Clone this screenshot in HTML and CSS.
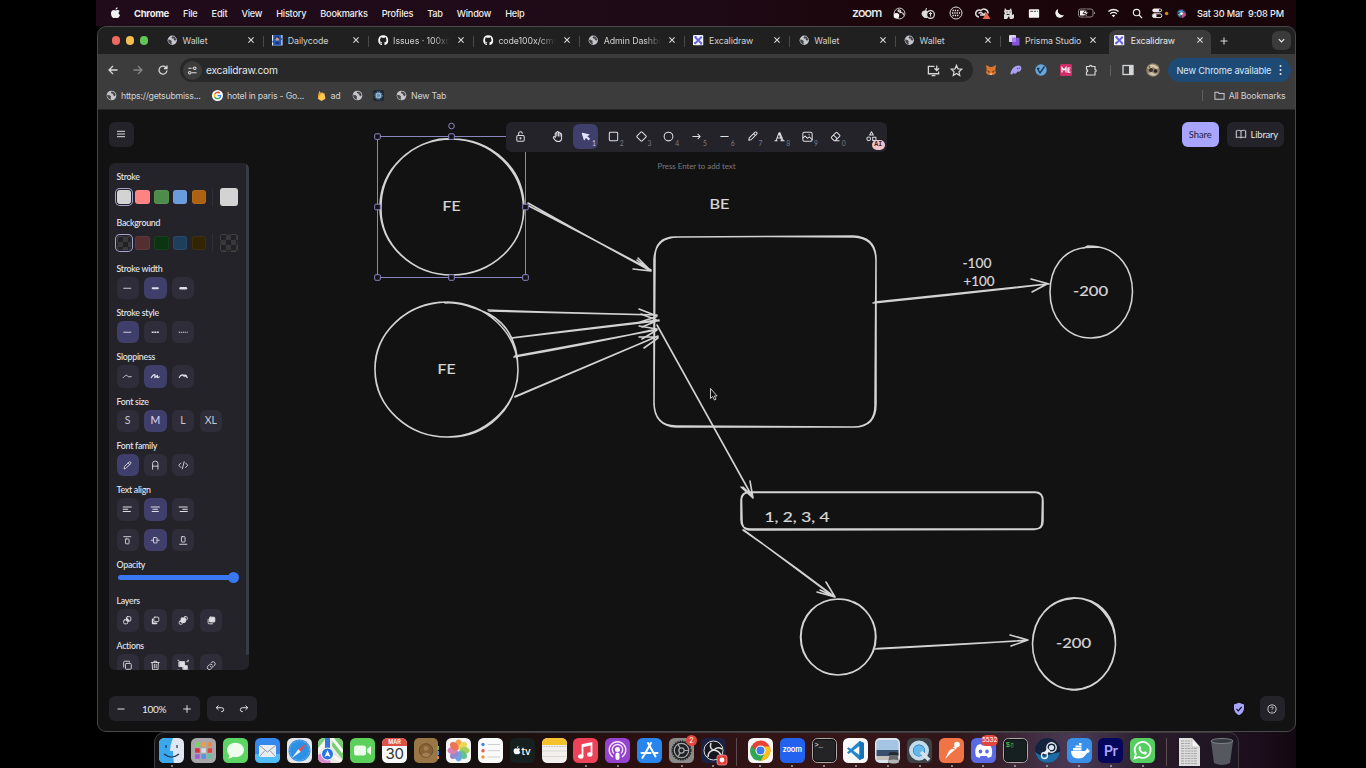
FILE: index.html
```html
<!DOCTYPE html>
<html lang="en">
<head>
<meta charset="utf-8">
<title>Excalidraw</title>
<link rel="stylesheet" href="styles.css">
</head>
<body>
<svg class="defs" aria-hidden="true">
  <symbol id="globe" viewBox="0 0 12 12"><circle cx="6" cy="6" r="5.3" fill="#c3c5c8"/><path d="M1.3 5.2 4 5.7 5.5 7.2 5 8.6 5.8 10.6 4 10.2C2.2 9.3 1 7.5 1.300 5.200zM6.200 1.500 5.200 3 6.500 4.200 8 4 7.600 5.500 9.400 6.700 10.600 5.500C10.200 3.300 8.500 1.600 6.200 1.500z" fill="#45474a"/></symbol>
  <symbol id="github" viewBox="0 0 16 16"><path fill="#fff" d="M8 .5a7.600 7.600 0 0 0-2.400 14.800c.4 0 .5-.2.500-.4v-1.500c-2.100.5-2.600-.9-2.600-.9-.3-.9-.8-1.100-.8-1.100-.7-.5 0-.5 0-.5.800 0 1.200.8 1.200.8.700 1.200 1.800.9 2.200.7 0-.5.300-.9.500-1.100-1.700-.2-3.500-.9-3.500-3.800 0-.8.300-1.500.8-2 0-.2-.300-1 .1-2 0 0 .6-.2 2.100.8a7 7 0 0 1 3.800 0c1.500-1 2.100-.8 2.100-.8.400 1 .1 1.800.1 2 .5.500.8 1.200.8 2 0 2.900-1.800 3.600-3.500 3.800.3.200.5.700.5 1.400v2.200c0 .2.100.4.500.4A7.600 7.600 0 0 0 8 .5z"/></symbol>
  <symbol id="exlogo" viewBox="0 0 12 12"><rect width="12" height="12" rx="1.500" fill="#f4f3ff"/><path d="M2 2l8 8M10 2 2 10" stroke="#6965db" stroke-width="2.200"/><path d="M1.800 1.800h2.200M8 10.200h2.200M2 8v2.200" stroke="#6965db" stroke-width="1.200"/></symbol>
  <symbol id="x" viewBox="0 0 8 8"><path d="M1.400 1.400l5.200 5.200M6.600 1.400 1.400 6.600" stroke="#d8dadc" stroke-width="1.100"/></symbol>
  <symbol id="apple" viewBox="0 0 16 18"><path fill="currentColor" d="M11 4.400c1.500 0 2.700.8 3.300 1.700-2.500 1.500-2.100 4.900.5 5.900-.7 2-2.200 4.600-3.900 4.600-1 0-1.500-.6-2.700-.6s-1.700.6-2.600.6C3.500 16.600 1.200 13 1.200 9.600c0-3.300 2.100-5.200 4.100-5.200 1.200 0 2.200.8 2.900.8.800 0 1.700-.8 2.800-.8zM8 3.900C7.900 2 9.400.4 11.100.2 11.400 2.100 9.800 3.900 8 3.900z"/></symbol>
  <symbol id="gear" viewBox="0 0 24 24"><circle cx="12" cy="12" r="9.500" fill="#202124" stroke="#202124" stroke-width="2" stroke-dasharray="1.500 1"/><circle cx="12" cy="12" r="7.500" fill="none" stroke="#a8a9ab" stroke-width="1.300"/><circle cx="12" cy="12" r="2.800" fill="none" stroke="#a8a9ab" stroke-width="1.300"/><path d="M14.800 12h5M10.600 9.500 8 5M10.600 14.500 8 19" stroke="#a8a9ab" stroke-width="1.300"/></symbol>
</svg>

<div class="desktop">
  <header class="menubar">
    <svg class="apple"><use href="#apple"/></svg>
    <nav class="menus"><b>Chrome</b><span>File</span><span>Edit</span><span>View</span><span>History</span><span>Bookmarks</span><span>Profiles</span><span>Tab</span><span>Window</span><span>Help</span></nav>
    <span class="zoomword">zoom</span>
    <div class="status">
      <svg viewBox="0 0 14 14" width="13" height="13"><circle cx="7" cy="7" r="5.800" fill="none" stroke="#ddd"/><circle cx="3.700" cy="9.500" r="3" fill="#fff"/><path d="M5 4c2-2 4 0 3 2 2-.5 4 1 3 3M5 4l3 2" fill="none" stroke="#ddd" stroke-width="1.200"/></svg>
      <svg viewBox="0 0 14 14" width="14" height="14"><path d="M5.500 2 4.500 5M1 7.500Q1 5 3.500 5H6v6.500Q1.500 12 1 7.500z" fill="#ddd" stroke="#ddd"/><circle cx="9.500" cy="8.500" r="3.900" fill="#1d0910" stroke="#ddd" stroke-width="1.200"/><path d="M9.500 10.500V6.500M8 8l1.500-1.500L11 8" stroke="#ddd" fill="none"/></svg>
      <svg viewBox="0 0 14 14" width="14" height="14"><circle cx="7" cy="7" r="6" fill="none" stroke="#ddd"/><path d="M3.500 4.500h7M3 7h8M3.500 9.500h7" stroke="#eee" stroke-width="1.500" stroke-dasharray="1.300 1"/></svg>
      <svg viewBox="0 0 16 14" width="16" height="14"><path d="M4 11a3.500 3.500 0 1 1 2-6.500 4 4 0 0 1 7 3" fill="none" stroke="#ddd" stroke-width="1.500"/><path d="M3.500 7.500q2-2 4 0t3-1M5 9h5" fill="none" stroke="#ddd" stroke-width="1.300"/><path d="M11.500 6.500 15.500 13h-8z" fill="#ee6a4d"/></svg>
      <svg viewBox="0 0 12 14" width="12" height="14"><path d="M1 13V9l1-2-1-1 1-4 1.500 2h3L8 2l1 4v3l2-1v4l-2 1H7l-1-3-2 3z" fill="#ddd"/><path d="M3.500 6h1M6.500 6h1M3.500 8.500h3" stroke="#222"/></svg>
      <svg viewBox="0 0 14 12" width="12" height="11"><rect x="1" y="1" width="12" height="10" rx="1" fill="#f5f5f5"/><path d="M2.500 3.500h3.500M7 3.500h2.500M10.500 3.500h1" stroke="#333"/></svg>
      <svg viewBox="0 0 12 12" width="11" height="11"><path d="M4.500 1a5 5 0 1 0 6.500 6.500A5 5 0 0 1 4.500 1z" fill="#f2f2f2"/></svg>
      <svg viewBox="0 0 18 10" width="18" height="10"><rect x=".5" y="1" width="14.500" height="8" rx="2" fill="none" stroke="#8c8488"/><path d="M2 2.500h7v5H2z" fill="#f2f2f2"/><path d="M8.500 1 5 5.500h2.500L6.500 9l4-5H8z" fill="#fff" stroke="#1d0910" stroke-width=".8"/><path d="M16.500 4v2" stroke="#8c8488"/></svg>
      <svg viewBox="0 0 14 12" width="13" height="12"><path d="M1.500 4.500q5.500-4.500 11 0M3.500 6.800q3.500-2.800 7 0" fill="none" stroke="#eee" stroke-width="1.400"/><path d="M5 8.500q2-1.500 4 0l-2 2z" fill="#eee"/></svg>
      <svg viewBox="0 0 12 12" width="11" height="11"><circle cx="5" cy="5" r="3.500" fill="none" stroke="#eee" stroke-width="1.200"/><path d="M7.700 7.700 11 11" stroke="#eee" stroke-width="1.400"/></svg>
      <svg viewBox="0 0 20 12" width="19" height="12"><rect x="2.500" y="1.200" width="10" height="4" rx="2" fill="#eee"/><circle cx="10.500" cy="3.200" r="1.200" fill="#1d0910"/><rect x="2.500" y="6.800" width="10" height="4" rx="2" fill="none" stroke="#eee"/><circle cx="5" cy="8.800" r="2" fill="#eee"/><circle cx="17.500" cy="6.500" r="1.800" fill="#d08a20"/></svg>
      <svg viewBox="0 0 12 12" width="11" height="11"><circle cx="6" cy="6" r="5" fill="#37345f"/><path d="M1.500 5q4-5 8 0-4-1-8 0z" fill="#4aa9dc"/><path d="M6 6q5-3 4.500 2-2 3-4 2.500z" fill="#c44e86"/><path d="M2 7q3-2 4-1-2 3-1 4z" fill="#55c5a5"/><circle cx="6" cy="6" r="1.500" fill="#fff"/></svg>
    </div>
    <span class="clock">Sat 30 Mar&nbsp; 9:08 PM</span>
  </header>

  <main class="window">
    <div class="tabs">
      <div class="lights"><i class="red"></i><i class="yellow"></i><i class="green"></i></div>
      <div class="tab"><svg><use href="#globe"/></svg><span>Wallet</span><svg class="close"><use href="#x"/></svg></div>
      <div class="tab"><svg viewBox="0 0 12 12"><rect width="12" height="12" fill="#e6ebf5"/><path d="M1.300 0h9.400v3L12 4.500 10.700 6v6H1.300V9L0 7.500 1.300 6z" fill="#2458b8"/><circle cx="6" cy="4.500" r="2.200" fill="#c59b8d"/><path d="M3.500 10q2.500-5 5 0z" fill="#182c59"/><path d="M3.500 4q2-4 5 0" fill="none" stroke="#17233c" stroke-width="1.200"/></svg><span>Dailycode</span><svg class="close"><use href="#x"/></svg></div>
      <div class="tab fade"><svg><use href="#github"/></svg><span>Issues · 100xd</span><svg class="close"><use href="#x"/></svg></div>
      <div class="tab fade"><svg><use href="#github"/></svg><span>code100x/cms</span><svg class="close"><use href="#x"/></svg></div>
      <div class="tab fade"><svg><use href="#globe"/></svg><span>Admin Dashbo</span><svg class="close"><use href="#x"/></svg></div>
      <div class="tab"><svg><use href="#exlogo"/></svg><span>Excalidraw</span><svg class="close"><use href="#x"/></svg></div>
      <div class="tab"><svg><use href="#globe"/></svg><span>Wallet</span><svg class="close"><use href="#x"/></svg></div>
      <div class="tab"><svg><use href="#globe"/></svg><span>Wallet</span><svg class="close"><use href="#x"/></svg></div>
      <div class="tab last"><svg viewBox="0 0 12 12"><rect width="8" height="8" rx="1" fill="#dcd4f5"/><rect x="3.500" y="3" width="8.500" height="9" rx="1" fill="#8552dc"/><path d="M3.500 3H8v5H3.500z" fill="#a883ee"/></svg><span>Prisma Studio</span><svg class="close"><use href="#x"/></svg></div>
      <div class="tab active"><svg><use href="#exlogo"/></svg><span>Excalidraw</span><svg class="close"><use href="#x"/></svg></div>
      <svg class="newtab" viewBox="0 0 10 10"><path d="M5 1.500v7M1.500 5h7" stroke="#d8d8d8" stroke-width="1.100"/></svg>
      <div class="tabsearch"><svg viewBox="0 0 10 10" width="9" height="9"><path d="M2 3.500l3 3 3-3" fill="none" stroke="#eee" stroke-width="1.300"/></svg></div>
    </div>

    <div class="navbar">
      <div class="navbtns">
        <svg viewBox="0 0 12 12"><path d="M10.500 6H2M6 2 2 6l4 4" fill="none" stroke="#d5d6d8" stroke-width="1.300"/></svg>
        <svg viewBox="0 0 12 12"><path d="M1.500 6H10M6 2l4 4-4 4" fill="none" stroke="#86878a" stroke-width="1.300"/></svg>
        <svg viewBox="0 0 12 12"><path d="M10 6.500A4 4 0 1 1 8.800 3.200L10 4.500M10 1.500v3H7" fill="none" stroke="#d5d6d8" stroke-width="1.300"/></svg>
      </div>
      <div class="omnibox">
        <div class="site"><svg viewBox="0 0 12 12" width="11" height="11"><path d="M1.500 3.500h3.500M5 8.500h5.500" stroke="#ddd" stroke-width="1.200"/><circle cx="8.500" cy="3.500" r="1.400" fill="none" stroke="#ddd" stroke-width="1.100"/><circle cx="3" cy="8.500" r="1.400" fill="none" stroke="#ddd" stroke-width="1.100"/><path d="M6 3.500h1" stroke="#ddd"/></svg></div>
        <span class="url">excalidraw.com</span>
        <svg viewBox="0 0 14 14" width="13" height="13"><path d="M8 2.500H1.500v8h11V8M5 12.500h4M10.500 1.500v5M8 4.500 10.500 7 13 4.500" fill="none" stroke="#d5d6d8" stroke-width="1.400"/></svg>
        <svg viewBox="0 0 14 14" width="13" height="13"><path d="M7 1.500l1.600 3.700 4 .4-3 2.700.9 4L7 10.200l-3.500 2.100.9-4-3-2.700 4-.4z" fill="none" stroke="#d5d6d8" stroke-width="1.300"/></svg>
      </div>
      <div class="exts">
        <svg viewBox="0 0 12 12"><path d="M1 1l4 2h2l4-2-.7 5 .7 3-2.500 2-2-.6H5.500l-2 .6L1 9l.7-3z" fill="#dc772e"/><path d="M1.700 6 5 7.500 4 9zM10.300 6 7 7.500 8 9z" fill="#7b3f1c"/><path d="M5 9.500h2l.3 1.300H4.700z" fill="#f3dfc8"/></svg>
        <svg viewBox="0 0 12 12"><path d="M.5 10C1 4 7 0 10.500 2c2.500 3-1 7-3 5.500C6 10 4 10.500 3.800 8.500 3 10 2 11 .5 10z" fill="#ab9ff2"/><path d="M7.500 3.800v1.300M9.300 3.600v1.300" stroke="#504681" stroke-width=".9"/></svg>
        <svg viewBox="0 0 12 12"><circle cx="6" cy="6" r="5.700" fill="#66a7dc"/><path d="M2.500 4.500 5 9l4.500-6.500M2 4.500h2.500" fill="none" stroke="#173955" stroke-width="1.400"/></svg>
        <svg viewBox="0 0 12 12"><rect width="12" height="12" rx="1.500" fill="#cf2c69"/><path d="M2 8.500v-5l2 2.500 2-2.500v5M10.500 4H8v4.200h2.500M8 6h2" fill="none" stroke="#fff" stroke-width="1.200"/></svg>
        <svg viewBox="0 0 12 12"><path d="M1.500 2.500h3a1.200 1.200 0 0 1 2.400 0h3.100v3a1.200 1.200 0 0 1 0 2.400v3.100H1.500V8a1.200 1.200 0 0 0 0-2.400z" fill="none" stroke="#d5d6d8" stroke-width="1.200"/></svg>
      </div>
      <i class="vsep"></i>
      <svg class="sidepanel" viewBox="0 0 12 12"><rect x="1" y="1.500" width="10" height="9" fill="none" stroke="#d5d6d8" stroke-width="1.300"/><path d="M7 1.500h4v9H7z" fill="#d5d6d8"/></svg>
      <svg class="avatar" viewBox="0 0 14 14"><circle cx="7" cy="7" r="6.800" fill="#8c7d68"/><path d="M1 5q5-7 12 0l-3 1-3-2-3 2z" fill="#d6c8a5"/><circle cx="5" cy="7" r="2" fill="#3a302b"/><circle cx="9.500" cy="8" r="1.800" fill="#292321"/><path d="M2 10l4-1 3 2 3-1q-4 6-10 0z" fill="#c9c2ad"/><circle cx="3.500" cy="4" r="1" fill="#53683e"/></svg>
      <div class="update"><span>New Chrome available</span><svg viewBox="0 0 3 12" width="3" height="12"><circle cx="1.500" cy="2" r="1" fill="#eee"/><circle cx="1.500" cy="6" r="1" fill="#eee"/><circle cx="1.500" cy="10" r="1" fill="#eee"/></svg></div>
    </div>

    <div class="bookmarks">
      <div class="bm b1"><svg><use href="#globe"/></svg><span>https://getsubmiss...</span></div>
      <div class="bm b2"><svg viewBox="0 0 12 12"><circle cx="6" cy="6" r="6" fill="#fff"/><path d="M8.500 3.500A3.500 3.500 0 0 0 3 4.300" fill="none" stroke="#ea4335" stroke-width="1.500"/><path d="M3 4.300a3.500 3.500 0 0 0 0 3.400" fill="none" stroke="#fbbc05" stroke-width="1.500"/><path d="M3 7.700a3.500 3.500 0 0 0 5.300.9" fill="none" stroke="#34a853" stroke-width="1.500"/><path d="M8.300 8.600A3.500 3.500 0 0 0 9.400 6.200H6" fill="none" stroke="#4285f4" stroke-width="1.500"/></svg><span>hotel in paris - Go...</span></div>
      <div class="bm b3"><svg viewBox="0 0 12 12"><path d="M2 9.500 3.500 1l2 3L6.500 2l1.200 2L9 3l1.300 6.500L6 12z" fill="#ffca50"/><path d="M2 9.500 3.500 1l2 3z" fill="#f59a25"/></svg><span>ad</span></div>
      <div class="bm b4"><svg><use href="#globe"/></svg></div>
      <div class="bm b5"><svg viewBox="0 0 12 12"><rect width="12" height="12" rx="1.500" fill="#1d2b38"/><circle cx="6" cy="6" r="2.500" fill="#6f8ca6" stroke="#94b8d8" stroke-width="1.500"/><circle cx="6" cy="6" r="4" fill="none" stroke="#94b8d8" stroke-dasharray="1.200 1.200"/></svg></div>
      <div class="bm b6"><svg><use href="#globe"/></svg><span>New Tab</span></div>
      <i class="vsep"></i>
      <div class="bm all"><svg viewBox="0 0 12 12"><path d="M1 2.500h3.500l1 1.200H11v6.500H1z" fill="none" stroke="#c9cbce" stroke-width="1.100"/></svg><span>All Bookmarks</span></div>
    </div>

    <div class="canvas">
      <svg class="drawing" viewBox="97 110 1198 622">
        <g class="sketch">
          <path d="M452 139C412 139 380 169 380 207S412 275 452 275S524 245 524 207S492 139 452 139M432 141C402 150 381 175 381 207C380 245 413 275 452 275C493 274 525 244 523.500 207C522 170 492 140 452 139Q441 138 432 141"/>
          <path d="M447 302C407 302 375 332 375 370S410 437 447 437S518 407 518 370S487 303 447 302M445 303Q460 301 489 314C509 325 518 344 518 370C517 408 487 437 450 437C407 438 376 407 375 370C374 335 404 304 445 302"/>
          <path d="M676 237q99-1 178 0 22 1 22 24l-1 142q1 24-22 24l-177-1q-22 0-22-24l1-142q-1-24 22-23M678 237l175-1q23 1 23 23v145q0 23-22 23H676q-21-1-22-23V260q1-23 24-23"/>
          <path d="M1083 248q8-3 16-1C1119 251 1132.500 268 1132.500 292C1132 318 1114 338 1091 338C1067 338 1050 318 1050 292C1050 268 1063 250 1085 247.500L1099 247M1084 248l4-2 10 1"/>
          <path d="M750 492l285 0q8 0 8 9v20q0 8-8 8H750q-9 0-9-9v-20q0-8 9-8M748 492.500l288 0q7 1 6.500 8l-.5 21q0 8-8 8l-285 .5q-7-1-7-9l-.5-22q1-6 6.500-6.500"/>
          <path d="M838 599C817 599 801 616 801 637S817 675 838 675S876 658 876 637S859 599 838 599M854 602C867 608 875.500 622 875.500 637C875 659 859 675 838 675C816 674 800.500 658 800.500 637C801 615 816 600 838 599Q850 599 857 604"/>
          <path d="M1074 598C1051 598 1032.500 618 1032.500 644S1051 689.500 1074 689.500S1115.500 669 1115.500 644S1097 598 1074 598M1060 600.500Q1074 595 1091 601C1108 609 1116 625 1115.500 645C1114 670 1097 690 1072 690C1050 688 1032 668 1032.500 643C1034 619 1048 600 1073 598.500"/>
          <path d="M528 203q60 34 123 68M527 205q62 32 124 65M651 271l-13-13M651 271l-18-2M651 271l-14-11"/>
          <path d="M488 310q80 3 169 5M489 311l167 4M657 316l-18-7M656 317l-16 5"/>
          <path d="M511 338q70-9 148-18M512 338l145-17M659 321l-18-7M659 320l-17 7"/>
          <path d="M514 357q70-12 143-28M515 356l141-26M657 329l-18-3M657 330l-15 9"/>
          <path d="M515 397q70-30 143-61M515 396.500l142-60M658 337l-19 0M658 338l-14 10"/>
          <path d="M657 325l96 173M657.500 326l95 171M753 498l-12-11M753 498l-3-17M752 496l-9-9"/>
          <path d="M873 303q90-9 175-19M875 302l172-18M1049 284l-18-5M1047 284l-15 8"/>
          <path d="M743 530q46 32 92 67M744 530l90 67M835 597l-18-5M835 597l-9-15M835 597l-15-7"/>
          <path d="M875 649q80-4 153-9M877 648.500l149-8M1028 640l-18-5M1028 640l-17 6"/>
        </g>
        <g class="handwriting">
          <text x="442.500" y="211" textLength="18" lengthAdjust="spacingAndGlyphs">FE</text>
          <text x="437.500" y="374" textLength="18" lengthAdjust="spacingAndGlyphs">FE</text>
          <text x="709.500" y="209" textLength="20" lengthAdjust="spacingAndGlyphs">BE</text>
          <text class="num" x="962.500" y="268" textLength="29" lengthAdjust="spacingAndGlyphs">-100</text>
          <text class="num" x="963.500" y="285.500" textLength="31" lengthAdjust="spacingAndGlyphs">+100</text>
          <text class="num" x="1073" y="296" textLength="35" lengthAdjust="spacingAndGlyphs">-200</text>
          <text class="num" x="764.500" y="521.500" textLength="65" lengthAdjust="spacingAndGlyphs">1, 2, 3, 4</text>
          <text class="num" x="1056" y="648" textLength="35" lengthAdjust="spacingAndGlyphs">-200</text>
        </g>
        <g class="selection">
          <rect x="377.500" y="136.500" width="148" height="141" fill="none"/>
          <circle cx="451.500" cy="126" r="2.800"/>
          <rect x="374.700" y="133.800" width="5.600" height="5.600" rx="1"/><rect x="448.700" y="133.800" width="5.600" height="5.600" rx="1"/>
          <rect x="374.700" y="204.200" width="5.600" height="5.600" rx="1"/><rect x="522.700" y="204.200" width="5.600" height="5.600" rx="1"/>
          <rect x="374.700" y="274.700" width="5.600" height="5.600" rx="1"/><rect x="448.700" y="274.700" width="5.600" height="5.600" rx="1"/><rect x="522.700" y="274.700" width="5.600" height="5.600" rx="1"/>
        </g>
        <path d="M710.500 388.500v10l2.200-2 1.700 3.500 1.600-.8-1.600-3.200h2.700z" fill="#111" stroke="#ddd" stroke-width=".9"/>
      </svg>

      <div class="ui">
        <div class="toprow">
          <div class="box menu"><svg viewBox="0 0 12 12" width="12" height="12"><path d="M2 3.300h8M2 6h8M2 8.700h8" stroke="#dedee5"/></svg></div>
          <div class="box tools">
            <div class="tool lock"><svg viewBox="0 0 14 14"><rect x="3" y="6" width="8" height="6" rx="1.300"/><path d="M5 6V4a2 2 0 0 1 4-.4"/><circle cx="7" cy="9" r=".6"/></svg></div>
            <i></i>
            <div class="tool"><svg viewBox="0 0 14 14"><path d="M4.600 8V3.500a.9.900 0 0 1 1.700 0V6.500M6.300 6.500V2.300a.9.900 0 0 1 1.700 0v4.200M8 6.500V3a.9.900 0 0 1 1.700 0v3.700M9.700 6.500V4.500a.9.900 0 0 1 1.700 0V9A3.800 3.800 0 0 1 7.500 12.500C5 12.500 4 11 2.500 8.300a.9.900 0 0 1 1.500-.9L4.600 8"/></svg></div>
            <div class="tool on"><svg viewBox="0 0 14 14"><path d="M3.500 3.500l2.200 7 1.500-3 3 3 1-1-3-3 2.500-1.500z" fill="#e3e2fe"/></svg><sub>1</sub></div>
            <div class="tool"><svg viewBox="0 0 14 14"><rect x="2.500" y="2.500" width="9" height="9" rx="1"/></svg><sub>2</sub></div>
            <div class="tool"><svg viewBox="0 0 14 14"><path d="M6.300 2.200a1 1 0 0 1 1.400 0l4.100 4.100a1 1 0 0 1 0 1.400l-4.100 4.100a1 1 0 0 1-1.400 0L2.200 7.700a1 1 0 0 1 0-1.400z"/></svg><sub>3</sub></div>
            <div class="tool"><svg viewBox="0 0 14 14"><circle cx="7" cy="7" r="4.700"/></svg><sub>4</sub></div>
            <div class="tool"><svg viewBox="0 0 14 14"><path d="M3 7h8M8.500 4.500 11 7 8.500 9.500"/></svg><sub>5</sub></div>
            <div class="tool"><svg viewBox="0 0 14 14"><path d="M3 7h8"/></svg><sub>6</sub></div>
            <div class="tool"><svg viewBox="0 0 14 14"><path d="M3 11l.5-2.500 6-6a1.300 1.300 0 0 1 2 2l-6 6zM8 4l2 2"/></svg><sub>7</sub></div>
            <div class="tool"><svg viewBox="0 0 14 14"><path d="M2 11.500h2.500M8.500 11.500h3.500M3.300 11.500 6.500 3h1l3.500 8.500M5 8.500h4M6.500 3.500l3 8"/></svg><sub>8</sub></div>
            <div class="tool"><svg viewBox="0 0 14 14"><rect x="2" y="2.500" width="10" height="9.500" rx="1.500"/><path d="M2 8.500l2.500-2 2.500 2.500 2-1.500 3 3M8.500 5h.5"/></svg><sub>9</sub></div>
            <div class="tool"><svg viewBox="0 0 14 14"><path d="M11 11.500H5.500L2.800 8.800a1 1 0 0 1 0-1.300l4.700-4.700a1 1 0 0 1 1.300 0l2.700 2.700a1 1 0 0 1 0 1.300L6.700 11.500M5 5.500l4 4"/></svg><sub>0</sub></div>
            <i></i>
            <div class="tool more"><svg viewBox="0 0 14 14"><path d="M7 1.800 9 5.500H5z"/><circle cx="4" cy="9.500" r="2"/><rect x="8.300" y="7.800" width="3.500" height="3.500"/></svg><b>AI</b></div>
          </div>
          <div class="share">Share</div>
          <div class="box library"><svg viewBox="0 0 14 14" width="12" height="12"><path d="M7 3.500C5.500 2.500 3 2.500 1.500 3.300v8C3 10.500 5.500 10.500 7 11.500c1.500-1 4-1 5.500-.2v-8C11 2.500 8.500 2.500 7 3.500zM7 3.500v8" fill="none" stroke="#dedee5" stroke-width="1.100"/></svg><span>Library</span></div>
        </div>
        <div class="hint">Press Enter to add text</div>

        <aside class="panel">
          <section class="colors"><h3>Stroke</h3><div class="row swatches"><i class="s1 sel"></i><i class="s2"></i><i class="s3"></i><i class="s4"></i><i class="s5"></i><em></em><i class="s1 big"></i></div></section>
          <section class="colors"><h3>Background</h3><div class="row swatches"><i class="checker sel"></i><i class="b-red"></i><i class="b-green"></i><i class="b-blue"></i><i class="b-brown"></i><em></em><i class="checker big"></i></div></section>
          <section><h3>Stroke width</h3><div class="row"><div class="btn"><svg viewBox="0 0 14 14"><path d="M3 7h8"/></svg></div><div class="btn on"><svg viewBox="0 0 14 14"><path d="M4 7h6" stroke-width="2"/></svg></div><div class="btn"><svg viewBox="0 0 14 14"><path d="M4 7h6" stroke-width="2.700"/></svg></div></div></section>
          <section><h3>Stroke style</h3><div class="row"><div class="btn on"><svg viewBox="0 0 14 14"><path d="M3 7h8"/></svg></div><div class="btn"><svg viewBox="0 0 14 14"><path class="butt" d="M3 7h8" stroke-width="1.600" stroke-dasharray="2.200 .7"/></svg></div><div class="btn"><svg viewBox="0 0 14 14"><path class="butt" d="M2 7h10" stroke-width="1.300" stroke-dasharray="1.300 .9"/></svg></div></div></section>
          <section><h3>Sloppiness</h3><div class="row"><div class="btn"><svg viewBox="0 0 14 14"><path d="M2.500 8.500Q6 4.500 7 6.500T11.500 7.500"/></svg></div><div class="btn on"><svg viewBox="0 0 14 14"><path d="M2.500 8.500Q5 4.500 6.800 5.300L6.500 8.500 9.500 6 9 8.500 11.500 7.800" stroke-width="1.300"/></svg></div><div class="btn"><svg viewBox="0 0 14 14"><path d="M2.500 8.500Q4 4.500 7 5.500t4.500 3M3 7.500q4-3.500 5 0M8 6q2.500-1 3 1.500" stroke-width="1.200"/></svg></div></div></section>
          <section><h3>Font size</h3><div class="row letters"><div class="btn">S</div><div class="btn on">M</div><div class="btn">L</div><div class="btn">XL</div></div></section>
          <section><h3>Font family</h3><div class="row"><div class="btn on"><svg viewBox="0 0 14 14"><path d="M3.500 10.800l.4-2.300 5-5a1.200 1.200 0 0 1 1.800 1.800l-5 5z M8 4.500l1.700 1.700"/></svg></div><div class="btn"><svg viewBox="0 0 14 14"><path d="M4 11.500V5a2.500 2.500 0 0 1 2.500-2.500h1A2.500 2.500 0 0 1 10 5v6.500M4 8h6"/></svg></div><div class="btn"><svg viewBox="0 0 14 14"><path d="M4.300 4.500 2 7l2.300 2.500M9.700 4.500 12 7 9.700 9.500M8 3 6 11"/></svg></div></div></section>
          <section class="align"><h3>Text align</h3><div class="row"><div class="btn"><svg viewBox="0 0 14 14"><path d="M2.500 4.500h9M2.500 7h5M2.500 9.500h8" stroke-width="1.300"/></svg></div><div class="btn on"><svg viewBox="0 0 14 14"><path d="M2.500 4.500h9M4.500 7h5M3.500 9.500h7" stroke-width="1.300"/></svg></div><div class="btn"><svg viewBox="0 0 14 14"><path d="M2.500 4.500h9M6.500 7h5M3.500 9.500h8" stroke-width="1.300"/></svg></div></div>
          <div class="row second"><div class="btn"><svg viewBox="0 0 14 14"><path d="M3 3h8"/><rect x="5" y="5.500" width="4" height="5.500" rx=".7"/></svg></div><div class="btn on"><svg viewBox="0 0 14 14"><path d="M2.500 7H5M9 7h2.500"/><rect x="5" y="4" width="4" height="6" rx=".7"/></svg></div><div class="btn"><svg viewBox="0 0 14 14"><path d="M3 11.500h8"/><rect x="5" y="3" width="4" height="6" rx=".7"/></svg></div></div></section>
          <section class="opacity"><h3>Opacity</h3><div class="track"><i></i></div></section>
          <section><h3>Layers</h3><div class="row"><div class="btn"><svg viewBox="0 0 14 14"><rect x="6" y="3" width="5" height="5" rx="1.200"/><rect x="3" y="6.500" width="4.500" height="4.500" rx="1.200"/><path d="M6.500 5.500l2 2" stroke-width="2"/></svg></div><div class="btn"><svg viewBox="0 0 14 14"><rect x="5.500" y="3.500" width="5.500" height="5" rx="1"/><path d="M4 6v4.500h4.500" stroke-width="1.700"/></svg></div><div class="btn"><svg viewBox="0 0 14 14"><rect x="8" y="3" width="3.500" height="3.500" rx="1"/><rect x="2.500" y="8" width="3.500" height="3.500" rx="1"/><rect x="4.500" y="4.500" width="5" height="5" rx="1" fill="#dedee5"/></svg></div><div class="btn"><svg viewBox="0 0 14 14"><rect x="5" y="3.500" width="6" height="5.500" rx="1" fill="#dedee5"/><path d="M3.500 6v4q0 1 1 1h4"/></svg></div></div></section>
          <section><h3>Actions</h3><div class="row"><div class="btn"><svg viewBox="0 0 14 14"><rect x="5" y="5" width="6.500" height="6.500" rx="1"/><path d="M3 9V3.500q0-1 1-1h5.500v1"/></svg></div><div class="btn"><svg viewBox="0 0 14 14"><path d="M2.500 4h9M3.500 4l.5 8h6l.5-8M5.500 4V2.500h3V4M6 6v4M8 6v4"/></svg></div><div class="btn"><svg viewBox="0 0 14 14"><rect x="2.500" y="3" width="6" height="5.500" fill="#dedee5"/><rect x="7" y="7.500" width="4.500" height="4" fill="#dedee5"/><path d="M1 1.500h1M12 1.500h1M1 12.500h1M12 12.500h1M11 3h1.500"/></svg></div><div class="btn"><svg viewBox="0 0 14 14"><path d="M6 8.500a2.200 2.200 0 0 0 3.200 0L11 6.700a2.300 2.300 0 0 0-3.200-3.200L7 4.300M8 6.500a2.200 2.200 0 0 0-3.200 0L3 8.300a2.300 2.300 0 0 0 3.200 3.200l.8-.8"/></svg></div></div></section>
        </aside>

        <footer class="bottom">
          <div class="box zoom"><svg viewBox="0 0 12 12" width="12" height="12"><path d="M2.500 6h7" stroke="#dedee5"/></svg><span>100%</span><svg viewBox="0 0 12 12" width="12" height="12"><path d="M2.200 6h7.600M6 2.200v7.600" stroke="#dedee5"/></svg></div>
          <div class="box undo"><svg viewBox="0 0 12 12" width="12" height="12"><path d="M4.500 2.500 2.200 4.700l2.300 2.200M2.200 4.700h5.500a1.900 1.900 0 0 1 0 3.900H7" fill="none" stroke="#dedee5"/></svg><svg viewBox="0 0 12 12" width="12" height="12"><path d="M7.500 2.500l2.300 2.200-2.300 2.200M9.800 4.700H4.300a1.900 1.900 0 0 0 0 3.900H5" fill="none" stroke="#dedee5"/></svg></div>
          <svg class="shield" viewBox="0 0 12 14" width="12" height="14"><path d="M6 .8l5 1.800v4.200Q10.500 11 6 13.200 1.500 11 1 6.800V2.600z" fill="#a8a5ff"/><path d="M3.500 7 5.300 8.800 8.600 5" fill="none" stroke="#17172b" stroke-width="1.200"/></svg>
          <div class="box help"><svg viewBox="0 0 14 14" width="12" height="12"><circle cx="7" cy="7" r="4.800" fill="none" stroke="#dedee5"/><path d="M5.600 5.800c0-2 3-1.700 2.800 0-.1 1-1.400 1-1.400 2M7 9.300v.7" fill="none" stroke="#dedee5"/></svg></div>
        </footer>
      </div>
    </div>
  </main>

  <div class="dock">
    <div class="app run"><svg viewBox="0 0 25 25"><rect width="25" height="25" rx="5.500" fill="#dfe7f0"/><path d="M5.500 0H14Q11 7 11 13h3q0 7 1 12H5.500A5.500 5.500 0 0 1 0 19.500v-14A5.500 5.500 0 0 1 5.500 0z" fill="#39a8ee"/><path d="M7 7v3M18 7v3M5 16q7.500 6 15 0" fill="none" stroke="#20334c" stroke-width="1.200"/></svg></div>
    <div class="app"><svg viewBox="0 0 25 25"><rect width="25" height="25" rx="5.500" fill="#a9a7aa"/><g stroke-width="4.500" fill="none"><path d="M4.200 6.500h4.500" stroke="#70dc5e"/><path d="M10.400 6.500h4.500" stroke="#f09b43"/><path d="M16.600 6.500h4.500" stroke="#e98b40"/><path d="M4.200 12.500h4.500" stroke="#d82f3c"/><path d="M10.400 12.500h4.500" stroke="#ddd"/><path d="M16.600 12.500h4.500" stroke="#e2453c"/><path d="M4.200 18.500h4.500" stroke="#9b59df"/><path d="M10.400 18.500h4.500" stroke="#5092ee"/><path d="M16.600 18.500h4.500" stroke="#61c4a0"/></g></svg></div>
    <div class="app"><svg viewBox="0 0 25 25"><rect width="25" height="25" rx="5.500" fill="#5dd564"/><ellipse cx="12.500" cy="12" rx="8.500" ry="7.300" fill="#eefced"/><path d="M6 16q1 3-1.500 4.500 4 0 6-2z" fill="#eefced"/></svg></div>
    <div class="app"><svg viewBox="0 0 25 25"><rect width="25" height="25" rx="5.500" fill="#3589ed"/><path d="M0 16h25v4a5 5 0 0 1-5 5H5a5 5 0 0 1-5-5z" fill="#4fbcf5"/><rect x="4" y="7" width="17" height="12" rx="1.500" fill="#e9edf0"/><path d="M4.500 7.500 12.500 14l8-6.500M4.500 18.500 10 12.500M20.500 18.500 15 12.500" fill="none" stroke="#8e9ca8"/></svg></div>
    <div class="app"><svg viewBox="0 0 25 25"><rect width="25" height="25" rx="5.500" fill="#e6e7e9"/><circle cx="12.500" cy="12.500" r="11" fill="#2c90e4"/><circle cx="12.500" cy="12.500" r="9.800" fill="none" stroke="#b8def5" stroke-dasharray=".5 1"/><path d="M20 5l-6.300 8.700-2.400-2.400z" fill="#ee4e43"/><path d="M5 20l6.300-8.700 2.400 2.400z" fill="#f4f4f4"/></svg></div>
    <div class="app"><svg viewBox="0 0 25 25"><clipPath id="mapclip"><rect width="25" height="25" rx="5.500"/></clipPath><g clip-path="url(#mapclip)"><rect width="25" height="25" fill="#e9eadf"/><path d="M0 0h8L0 10z" fill="#7cd47a"/><path d="M15 0h10v22L14 8z" fill="#74cc6e"/><path d="M0 17l8-4 5 12H0z" fill="#d98bce"/><path d="M14 0l11 14M0 13 12 0M15 18l10 7" stroke="#f8f8f4" stroke-width="3"/><path d="M7 0h5v10H7z" fill="#3976db"/><circle cx="9.500" cy="16" r="6" fill="#2774e5" stroke="#fff"/><path d="M9.500 12 6.500 19l3-1.500 3 1.500z" fill="#fff"/></g></svg></div>
    <div class="app"><svg viewBox="0 0 25 25"><rect width="25" height="25" rx="5.500" fill="#5bd15b"/><rect x="4" y="7.500" width="12" height="10" rx="2.500" fill="#ecfbea"/><path d="M17 11l4-3v9l-4-3z" fill="#ecfbea"/></svg></div>
    <div class="app cal"><small>MAR</small><span>30</span></div>
    <div class="app"><svg viewBox="0 0 25 25"><rect width="24" height="25" rx="5" fill="#9a7646"/><path d="M24 8v4" stroke="#72b34a" stroke-width="2"/><path d="M24 13v4" stroke="#4c8fe0" stroke-width="2"/><path d="M24 18v3" stroke="#e68a32" stroke-width="2"/><circle cx="12" cy="12.500" r="6.800" fill="#886236" stroke="#6e4e2b"/><circle cx="12" cy="10.500" r="2.300" fill="#a38052"/><path d="M7.500 17q4.500-5 9 0-4 4-9 0z" fill="#a38052"/></svg></div>
    <div class="app"><svg viewBox="0 0 25 25"><rect width="25" height="25" rx="5.500" fill="#f5f5f3"/><g opacity=".88"><ellipse cx="12.500" cy="6.500" rx="3.500" ry="5" fill="#f29b32"/><ellipse cx="12.500" cy="6.500" rx="3.500" ry="5" fill="#ead33e" transform="rotate(45 12.500 12.500)"/><ellipse cx="12.500" cy="6.500" rx="3.500" ry="5" fill="#9aca45" transform="rotate(90 12.500 12.500)"/><ellipse cx="12.500" cy="6.500" rx="3.500" ry="5" fill="#56b887" transform="rotate(135 12.500 12.500)"/><ellipse cx="12.500" cy="6.500" rx="3.500" ry="5" fill="#559be0" transform="rotate(180 12.500 12.500)"/><ellipse cx="12.500" cy="6.500" rx="3.500" ry="5" fill="#8c78cc" transform="rotate(225 12.500 12.500)"/><ellipse cx="12.500" cy="6.500" rx="3.500" ry="5" fill="#d971a9" transform="rotate(270 12.500 12.500)"/><ellipse cx="12.500" cy="6.500" rx="3.500" ry="5" fill="#ec6246" transform="rotate(315 12.500 12.500)"/></g></svg></div>
    <div class="app"><svg viewBox="0 0 25 25"><rect width="25" height="25" rx="5.500" fill="#fafafa"/><circle cx="5" cy="6.500" r="1.700" fill="#3c87ef"/><circle cx="5" cy="12.700" r="1.700" fill="#e85b4c"/><circle cx="5" cy="19" r="1.700" fill="#ed963b"/><path d="M9.500 6.500H22M9.500 12.700H22M9.500 19H22" stroke="#cfcfcf"/></svg></div>
    <div class="app tv"><svg viewBox="0 0 16 18"><use href="#apple"/></svg><span>tv</span></div>
    <div class="app"><svg viewBox="0 0 25 25"><rect width="25" height="25" rx="5.500" fill="#f2f0ed"/><path d="M0 7V5.500A5.500 5.500 0 0 1 5.500 0h14A5.500 5.500 0 0 1 25 5.500V7z" fill="#f6c32e"/><path d="M0 13h25M0 18.500h25" stroke="#d5d2ce" stroke-width=".8"/><path d="M1 8.500h23" stroke="#a8a29b" stroke-dasharray=".6 1"/></svg></div>
    <div class="app run"><svg viewBox="0 0 25 25"><rect width="25" height="25" rx="5.500" fill="#ed4258"/><path d="M9.500 18V7l9-2v11" fill="none" stroke="#fff" stroke-width="1.800"/><path d="M9.500 8l9-2" stroke="#fff" stroke-width="2.500"/><ellipse cx="7.800" cy="18.500" rx="2.700" ry="2.200" fill="#fff"/><ellipse cx="16.800" cy="16.500" rx="2.700" ry="2.200" fill="#fff"/></svg></div>
    <div class="app run"><svg viewBox="0 0 25 25"><rect width="25" height="25" rx="5.500" fill="#9542cf"/><path d="M8 19a8.300 8.300 0 1 1 9 0M9 15.500a5.200 5.200 0 1 1 7 0" fill="none" stroke="#f4e7fd" stroke-width="1.400"/><circle cx="12.500" cy="11.500" r="2.500" fill="#fff"/><rect x="10.500" y="14.500" width="4" height="7.500" rx="2" fill="#fff"/></svg></div>
    <div class="app"><svg viewBox="0 0 25 25"><rect width="25" height="25" rx="5.500" fill="#2785eb"/><path d="M14 5 7.500 16.500M11 5l7.500 13.500M4.500 15h9M17 15h3.500M6.500 18l-1 1.800" fill="none" stroke="#fff" stroke-width="2" stroke-linecap="round"/></svg></div>
    <div class="app run"><svg viewBox="0 0 25 25"><rect width="25" height="25" rx="5.500" fill="#8b8a88"/><use href="#gear" x="1" y="1" width="23" height="23"/></svg><b class="badge">2</b></div>
    <div class="app run"><svg viewBox="0 0 25 25"><rect width="25" height="25" rx="5.500" fill="#1b2142"/><circle cx="12.500" cy="12.500" r="9.500" fill="#17181f" stroke="#ddd"/><path d="M10 5q-2 6 3 7 6 1 7 6M13 12q-6 1-6 7M13 12q3-4 8-1" fill="none" stroke="#ddd" stroke-width="1.500"/><rect x="16" y="17" width="10" height="10" rx="2.500" fill="#e53c39" stroke="#f4a9a1" stroke-width=".7"/><circle cx="21" cy="22" r="2.400" fill="#fff"/></svg></div>
    <i class="dsep"></i>
    <div class="app run"><svg viewBox="0 0 25 25"><rect width="25" height="25" rx="5.500" fill="#f5f5f5"/><circle cx="12.500" cy="12.500" r="10" fill="#e54335"/><path d="M3.800 7.500 10 16l-1 6.500A10 10 0 0 1 3.800 7.500z" fill="#31a852"/><path d="M12.500 8.500h9.200A10 10 0 0 1 12 22.500l4-7z" fill="#fbc116"/><path d="M9 22A10 10 0 0 0 13 22.500l3-6H9z" fill="#31a852"/><circle cx="12.500" cy="12.500" r="5" fill="#fff"/><circle cx="12.500" cy="12.500" r="4" fill="#3e7df0"/></svg></div>
    <div class="app run zm">zoom</div>
    <div class="app run term"><span>&gt;_</span></div>
    <div class="app run"><svg viewBox="0 0 25 25"><rect width="25" height="25" rx="5.500" fill="#f8f8f8"/><path d="M16.500 3 21 5v15l-4.500 2L4 10.500l1.500-1.300L16.500 17V8L5.500 16 4 14.600z" fill="#2387c9"/><path d="M16.500 3 21 5v15l-4.500 2z" fill="#1673b6"/></svg></div>
    <div class="app run"><svg viewBox="0 0 25 25"><rect width="25" height="25" rx="5" fill="#dbe5ee"/><rect x="1.500" y="2" width="22" height="12" rx="3" fill="#a5c4e4"/><path d="M1.500 12h22v6h-22z" fill="#38506d"/><path d="M1.500 18h22v4h-22z" fill="#c6c0b8"/><ellipse cx="18.500" cy="16" rx="5" ry="2" fill="#27292d"/><path d="M14.500 17h8l1.500 8H13z" fill="#64686b"/><ellipse cx="18.500" cy="23.500" rx="5.500" ry="2" fill="#b3b5b5"/></svg></div>
    <div class="app run"><svg viewBox="0 0 25 25"><rect width="25" height="25" rx="5.500" fill="#3e4146"/><circle cx="12" cy="12.500" r="8" fill="#24569a" stroke="#c1ddeb" stroke-width="4"/><circle cx="12" cy="12.500" r="5.500" fill="#63b8ed"/><path d="M14 14l8 8" stroke="#dbe2e6" stroke-width="3.500"/></svg></div>
    <div class="app run"><svg viewBox="0 0 25 25"><rect width="25" height="25" rx="5.500" fill="#f17447"/><circle cx="18" cy="6.500" r="2.800" fill="#fff"/><path d="M16 8l2 2-6 5-6 6 4-8z" fill="#fff"/><path d="M12 10l4 1" stroke="#f17447"/></svg></div>
    <div class="app run"><svg viewBox="0 0 25 25"><rect width="25" height="25" rx="5.500" fill="#5b69e4"/><path d="M5 18.500Q2.800 12 6.500 7L10 6l1 1.500h3.500L15.500 6l3.500 1q3.500 5 1.500 11.500L17 20l-1.200-2H9.500l-1 2z" fill="#fff"/><ellipse cx="9.500" cy="13.500" rx="1.800" ry="2" fill="#5b69e4"/><ellipse cx="16" cy="13.500" rx="1.800" ry="2" fill="#5b69e4"/></svg><b class="badge wide">5532</b></div>
    <div class="app run term green"><span>$▯</span></div>
    <div class="app run"><svg viewBox="0 0 25 25"><circle cx="12.500" cy="12.500" r="12.500" fill="#14243e"/><path d="M0 14q6 5 12 3l13-3A12.500 12.500 0 0 1 1 17z" fill="#1c6da6"/><circle cx="16.500" cy="9.500" r="4.700" fill="none" stroke="#eef3f6" stroke-width="1.400"/><circle cx="16.500" cy="9.500" r="2.600" fill="#dce5ec"/><path d="M.5 12l10 4.500 5-3.500-3-3-4 5.500z" fill="#eef3f6"/><circle cx="9.500" cy="17.500" r="3" fill="none" stroke="#eef3f6" stroke-width="1.300"/></svg></div>
    <div class="app run"><svg viewBox="0 0 25 25"><rect width="25" height="25" rx="5.500" fill="#398fe8"/><path d="M4 13h14q1.500-.2 2-3 2 1 1.500 2.300l1.500.2Q22 15 20 15q-3 5.500-8.500 5.500Q4 20.500 4 13zM6 10h8.500v2.500H6zM8.500 7.500h6v2h-6zM12 5h2.500v2H12z" fill="#fff"/></svg></div>
    <div class="app run pr">Pr</div>
    <div class="app run"><svg viewBox="0 0 25 25"><rect width="25" height="25" rx="5.500" fill="#55cf61"/><path d="M4.500 20.500l1.300-4.500a8 8 0 1 1 3.200 3z" fill="none" stroke="#fff" stroke-width="1.700"/><path d="M9 8.500q1-1.200 1.700 0l.6 1.500-.8 1.200q1.200 2.300 3.300 3l1.200-1 2 1.200q-.4 2.400-2.500 2.200-5.500-1.500-6-6.300z" fill="#fff"/></svg></div>
    <i class="dsep"></i>
    <div class="app doc"><svg viewBox="0 0 21 28"><path d="M0 0h13l8 9v19H0z" fill="#dedede"/><path d="M13 0v9h8z" fill="#f6f6f6" stroke="#999" stroke-width=".5"/><path d="M2 3h9M2 5.500h9M2 8h9M2 10.500h16M2 13h16M2 15.500h16M2 18h16M2 20.500h16M2 23h16M2 25.500h16" stroke="#969696" stroke-width=".8" stroke-dasharray="3 .8 2 .6"/></svg></div>
    <div class="app trash"><svg viewBox="0 0 24 28"><path d="M1 3l3 22q8 4 16 0l3-22z" fill="#5b6166" opacity=".9"/><ellipse cx="12" cy="3" rx="11" ry="2.500" fill="#353b40" stroke="#8a9095" stroke-width=".8"/></svg></div>
  </div>
</div>
</body>
</html>
```
FILE: styles.css
```css
* { box-sizing: border-box; }
body { margin: 0; background: #000; font-family: Inter, "Liberation Sans", sans-serif; color: #e8e8ea; overflow: hidden; }
.defs { display: none; }
svg { display: block; flex: none; overflow: visible; }
i, em { font-style: normal; }

.desktop { width: 1200px; height: 768px; margin-left: 96px; overflow: hidden; display: flex; flex-direction: column;
  background: linear-gradient(90deg, #000 3%, #0d0608 40%, #250d10 65%, #2b2034 82%, #1c0d1b 97%, #120811); }

.menubar { height: 26px; flex: none; display: flex; align-items: center; padding: 0 12px 0 14px; font-size: 10px; color: #eee; white-space: nowrap;
  background: linear-gradient(90deg, #200b1a, #1e0a17 50%, #1c060b 65%, #170509); }
.apple { width: 11px; height: 12px; color: #f2f2f2; margin-right: 13px; }
.menus { display: flex; align-items: baseline; gap: 14.1px; width: 500px; font-weight: 500; font-size: 9.200px; letter-spacing: -.24px; }
.menus b { font-weight: 700; font-size: 9.500px; letter-spacing: -.3px; }
.zoomword { width: 33px; margin-left: 218px; font-size: 12.500px; font-weight: 500; letter-spacing: -.9px; line-height: 16px; padding-bottom: 1px; }
.status { display: grid; grid-template-columns: 28.5px 28.5px 28px 26px 25px 25px 26px 29px 25px 22px 22px 22px; justify-items: center; align-items: center; }
.clock { margin-left: auto; font-weight: 500; font-size: 9.200px; letter-spacing: -.15px; }

.window { height: 706px; width: 1199px; margin-left: 1px; flex: none; border: 1px solid #4a4748; border-radius: 9px; overflow: hidden; background: #3c3c3c; display: flex; flex-direction: column; }
.tabs { height: 27px; flex: none; display: flex; align-items: center; background: #202020; padding-left: 13.500px; font-size: 8.800px; letter-spacing: -.08px; color: #cfd0d2; }
.lights { display: flex; gap: 5.500px; width: 48px; margin-right: -1px; }
.lights i { width: 8.500px; height: 8.500px; border-radius: 50%; }
.red { background: #ed6a5e; } .yellow { background: #f5bf4f; } .green { background: #61c554; }
.tab { width: 105.3px; height: 25px; display: flex; align-items: center; padding: 0 9px 1px 8.500px; flex: none; position: relative; }
.tab::after { content: ""; position: absolute; right: 0; top: 8px; width: 1px; height: 11px; background: #48494b; }
.tab > svg { width: 10.500px; height: 10.500px; margin-right: 5px; }
.tab > svg.close { width: 8px; height: 8px; margin: 0; }
.tab span { flex: 1; white-space: nowrap; margin-right: 1px; line-height: 13px; }
.fade span { -webkit-mask-image: linear-gradient(90deg, #000 65%, transparent 90%); mask-image: linear-gradient(90deg, #000 65%, transparent 90%); }
.tab.last::after, .tab.active::after { display: none; }
.tab.active { width: 102px; height: 24px; align-self: flex-end; background: #3c3c3c; border-radius: 7px 7px 0 0; color: #e8e8e8; padding: 0 7.500px 4px 5px; margin-left: 3px; }
.tab.active > svg:first-child { margin-right: 6px; }
.newtab { width: 10px; height: 10px; margin-left: 8px; }
.tabsearch { margin-left: auto; margin-right: 4px; width: 19px; height: 19px; border-radius: 6px; background: #3b3b3b; display: flex; align-items: center; justify-content: center; }

.navbar { height: 28px; flex: none; display: flex; align-items: center; padding: 4px 4px 0 9px; }
.navbtns { display: flex; gap: 13px; width: 73px; }
.navbtns svg { width: 12px; height: 12px; }
.omnibox { width: 793px; height: 24px; border-radius: 12px; background: #282828; display: flex; align-items: center; padding: 0 10.500px 0 3px; }
.omnibox svg + svg { margin-left: 9.500px; }
.site { width: 19px; height: 19px; border-radius: 50%; background: #3c3c3c; display: flex; align-items: center; justify-content: center; }
.url { flex: 1; font-size: 10.200px; letter-spacing: -.22px; margin-left: 4px; color: #e4e5e7; }
.exts { display: flex; gap: 13px; margin-left: 12px; }
.exts svg { width: 12px; height: 12px; }
.vsep { width: 1px; height: 11px; background: #5e6063; }
.navbar .vsep { margin-left: 12.500px; }
.sidepanel { width: 12px; height: 12px; margin-left: 11.500px; }
.avatar { width: 14px; height: 14px; margin-left: 12px; }
.update { margin-left: 8px; width: 122.500px; height: 24px; border-radius: 12px; background: #1e4a76; display: flex; align-items: center; justify-content: space-between; padding: 0 9px 0 8.500px; font-size: 9.300px; letter-spacing: -.18px; color: #d5e6f7; white-space: nowrap; }

.bookmarks { height: 28px; flex: none; display: flex; align-items: center; padding: 0 9.500px 1px 8px; font-size: 8.800px; letter-spacing: -.22px; color: #cfd1d4; border-bottom: 1px solid #252525; white-space: nowrap; }
.bm { display: flex; align-items: center; gap: 4px; flex: none; }
.bm svg { width: 11px; height: 11px; }
.b1 { width: 106px; } .b2 { width: 103.500px; } .b3 { width: 36px; } .b4 { width: 21.500px; } .b5 { width: 23px; } .b6 { width: 60px; }
.bm.b1 { letter-spacing: -.26px; }
.bookmarks .vsep { margin-left: auto; margin-right: 11px; }

.canvas { flex: 1; min-height: 0; background: #121212; position: relative; margin: 0 -1px -1px -1px; font-family: Lato, "Open Sans", sans-serif; }
.drawing { position: absolute; left: 0; top: 0; width: 1198px; height: 622px; }
.sketch path { fill: none; stroke: #d3d3d3; stroke-width: 1.550; stroke-linecap: round; stroke-linejoin: round; }
.handwriting text { font: 12.500px Lato, "Open Sans", sans-serif; fill: #d8d8d8; stroke: #d8d8d8; stroke-width: .2; }
.handwriting .num { font-size: 14px; }
.selection rect, .selection circle { stroke: #8a86c4; stroke-width: 1; fill: #121212; }
.selection rect:first-child { fill: none; }
.ui { position: relative; height: 621px; padding: 11.500px 11.500px 0 11.500px; display: flex; flex-direction: column; }
.box { background: #232329; border-radius: 6px; display: flex; align-items: center; }
.toprow { height: 30px; display: flex; align-items: flex-start; }
.menu { width: 25px; height: 25px; justify-content: center; }
.tools { width: 381px; height: 30px; margin-left: 372px; padding: 0 2.500px; }
.tool { width: 25px; height: 25px; margin-right: 2.750px; border-radius: 6px; display: flex; align-items: center; justify-content: center; position: relative; flex: none; }
.tool svg { width: 13px; height: 13px; fill: none; stroke: #dedee5; stroke-width: 1.100; stroke-linejoin: round; stroke-linecap: round; }
.tool.on { background: #403e6a; }
.tool.on svg { stroke: #e3e2fe; }
.tool sub { position: absolute; right: 2px; bottom: 2px; font-size: 6.800px; line-height: 8px; color: #7d7d85; }
.tool.on sub { color: #c9c8ea; }
.tools > i { width: 1px; height: 17px; background: #35353d; margin: 0 6.500px 0 3px; }
.tools > i:nth-last-child(2) { margin: 0 6px 0 2.500px; }
.more b { position: absolute; left: 13px; top: 16px; width: 12.500px; height: 9.500px; border-radius: 5px; background: #f0c4ca; color: #3a2226; font: bold 6.500px/9.500px "Liberation Mono", monospace; text-align: center; }
.share { width: 37.500px; height: 25px; margin-left: 295px; border-radius: 6px; background: #a8a5ff; color: #1e1c3a; font-size: 9.400px; line-height: 25px; text-align: center; }
.library { width: 57px; height: 25px; margin-left: 8px; font-size: 9.500px; letter-spacing: -.2px; color: #e3e3e8; padding-left: 7.500px; gap: 4px; }
.hint { height: 11px; margin: 9px 0 0 549px; font-size: 7.900px; line-height: 11px; letter-spacing: -.03px; color: #7a7a7e; width: 90px; white-space: nowrap; }

.panel { width: 140px; height: 507px; margin-top: -8.500px; background: #232329; border-radius: 6px; overflow: hidden; padding: 7px 8px 0; position: relative; flex: none; }
.panel::after { content: ""; position: absolute; right: 0; top: 0; width: 2.500px; height: 492px; background: #383c45; border-radius: 2px; }
.panel section { height: 44.350px; }
.panel section.colors { height: 45.800px; }
.panel section.align { height: 75px; }
.panel section.opacity { height: 36px; }
.panel h3 { margin: 0; height: 15px; font-size: 8.800px; letter-spacing: -.25px; font-weight: 500; line-height: 14.500px; color: #e8e8ee; white-space: nowrap; }
.row { display: flex; gap: 5.300px; }
.row.second { margin-top: 8px; }
.btn { width: 22.400px; height: 22.400px; border-radius: 6px; background: #2e2d39; display: flex; align-items: center; justify-content: center; flex: none; font-size: 10.500px; line-height: 20px; color: #c9c9d2; }
.letters .btn { padding-bottom: 1.500px; }
.btn.on { background: #403e6a; color: #e0dfff; }
.btn svg { width: 12.500px; height: 12.500px; fill: none; stroke: #dedee5; stroke-width: 1; stroke-linecap: round; stroke-linejoin: round; }
.btn svg .butt { stroke-linecap: butt; }
.swatches { gap: 4.300px; align-items: center; height: 24px; }
.swatches i { width: 14.500px; height: 14.500px; border-radius: 3px; flex: none; border: 1px solid rgba(255,255,255,.05); }
.swatches em { width: 1px; height: 17px; background: #303038; margin: 0 2.500px 0 2px; flex: none; }
.swatches .big { width: 17.500px; height: 17.500px; }
.sel { box-shadow: 0 0 0 1px #232329, 0 0 0 2px #a6a3cf; }
.s1 { background: #d3d3d3; } .s2 { background: #ff8383; } .s3 { background: #4d8d49; } .s4 { background: #6a9bdc; } .s5 { background: #ac6210; }
.b-red { background: #552f30; } .b-green { background: #0b3510; } .b-blue { background: #1e3f5c; } .b-brown { background: #332501; }
.checker { background: conic-gradient(#37373c 25%, #222226 0 50%, #37373c 0 75%, #222226 0) 0 0 / 10px 10px; }
.track { height: 5px; width: 120px; margin: 1.500px 0 0 1.500px; border-radius: 3px; background: #3a77f2; position: relative; }
.track i { position: absolute; right: -1px; top: -3px; width: 11px; height: 11px; border-radius: 50%; background: #3a77f2; }

.bottom { display: flex; align-items: center; margin-top: 26px; height: 25px; }
.zoom { width: 91px; height: 25px; justify-content: space-between; padding: 0 6.500px; font-size: 10px; letter-spacing: -.3px; }
.undo { width: 50px; height: 25px; margin-left: 7px; justify-content: space-between; padding: 0 7px; }
.shield { margin-left: auto; }
.help { width: 24.500px; height: 25px; margin-left: 15px; justify-content: center; }

.dock { width: 1085px; height: 48px; margin: 0 0 0 58px; flex: none; border: 1px solid #403c3f; border-radius: 10px 10px 0 0; display: flex; padding-top: 5px; align-items: flex-start;
  background: linear-gradient(90deg, #121214, #16100f 30%, #2b1010 45%, #351619 64%, #2f1518 74%, #4a3a57 85%, #281b29 92%, #1c1420); }
.app { width: 25px; height: 25px; margin: 0 3.450px; flex: none; position: relative; border-radius: 5.500px; }
.app:first-child { margin-left: 4px; }
.app > svg { width: 25px; height: 25px; }
.run::after { content: ""; position: absolute; left: 11.500px; top: 27px; width: 2px; height: 2px; border-radius: 1px; background: #aaa; }
.dsep { width: 1px; height: 28px; margin: 0 7px; background: #5b4c50; flex: none; }
.cal { background: #f8f8f8; overflow: hidden; text-align: center; }
.cal small { display: block; height: 7.500px; background: #dd5147; color: #fff; font-size: 5.500px; line-height: 8px; font-weight: 600; }
.cal span { display: block; color: #333; font-size: 15px; line-height: 16px; letter-spacing: -.3px; }
.tv { background: #16211f; display: flex; align-items: center; justify-content: center; color: #fff; font-size: 10px; font-weight: 500; }
.tv > svg { width: 8px; height: 9px; }
.zm { background: #2361ef; color: #fff; font-size: 7.500px; line-height: 24px; text-align: center; font-weight: 600; letter-spacing: -.2px; }
.term { background: #242427; border: 1.500px solid #aaa; outline: 1px solid #111; outline-offset: -2.500px; color: #eee; font: 7px/9px "Liberation Mono", monospace; padding: 2px; }
.term.run::after { left: 10px; top: 25.500px; }
.term.green { background: #172021; color: #55d154; }
.pr { background: #06065b; color: #ada8ff; font-size: 14px; font-weight: 600; line-height: 25px; text-align: center; letter-spacing: -.4px; }
.badge { position: absolute; right: -3px; top: -3px; min-width: 11px; height: 11px; border-radius: 6px; background: #e0473f; color: #fff; font-size: 7px; line-height: 11px; font-weight: 400; text-align: center; }
.badge.wide { width: 16.500px; right: -2px; font-size: 6.500px; letter-spacing: -.2px; }
.doc > svg { width: 21px; height: 28px; margin-left: 2px; }
.trash { margin-left: 4.500px; }
.trash > svg { width: 24px; height: 28px; }
```
